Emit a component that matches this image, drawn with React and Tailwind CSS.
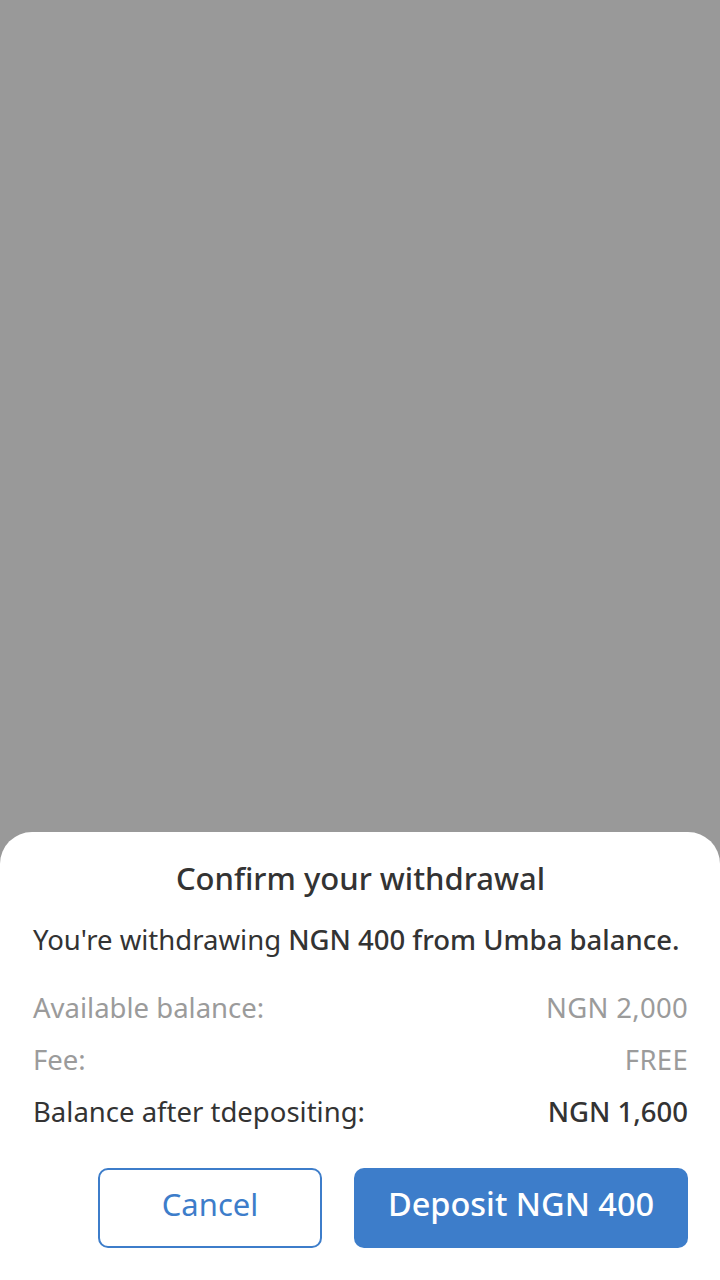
import React from "react";

const rows = [
  { label: "Available balance:", value: "NGN 2,000", muted: true },
  { label: "Fee:", value: "FREE", muted: true },
  { label: "Balance after tdepositing:", value: "NGN 1,600", muted: false },
];

export default function App() {
  return (
    <div className="w-[720px] h-[1280px] bg-[#999999] flex flex-col justify-end" style={{ fontFamily: "'Noto Sans', 'Open Sans', sans-serif" }}>
      <div className="bg-white rounded-t-[32px] pl-[33px] pr-[32px] pt-[28px] pb-[32px] text-[#333333]">
        <h2 className="text-center text-[31px] leading-[36px] font-medium">Confirm your withdrawal</h2>
        <p className="mt-[26px] text-[27.5px] leading-[36px] whitespace-nowrap">
          You're withdrawing <span className="font-medium">NGN 400 from Umba balance.</span>
        </p>
        <div className="mt-[24px] flex flex-col">
          {rows.map((r) => (
            <div key={r.label} className="flex justify-between h-[52px] items-center text-[27.5px]">
              <span className={r.muted ? "text-[#9b9b9b]" : ""}>{r.label}</span>
              <span className={r.muted ? "text-[#9b9b9b] tracking-[0.3px]" : "font-medium"}>{r.value}</span>
            </div>
          ))}
        </div>
        <div className="mt-[30px] flex justify-end gap-[32px]">
          <button className="w-[224px] h-[80px] pb-[8px] rounded-[10px] border-2 border-[#3d7dca] text-[#3d7dca] text-[31px]">Cancel</button>
          <button className="w-[334px] h-[80px] pb-[8px] rounded-[10px] bg-[#3d7dca] text-white text-[32.5px] font-medium">Deposit NGN 400</button>
        </div>
      </div>
    </div>
  );
}
